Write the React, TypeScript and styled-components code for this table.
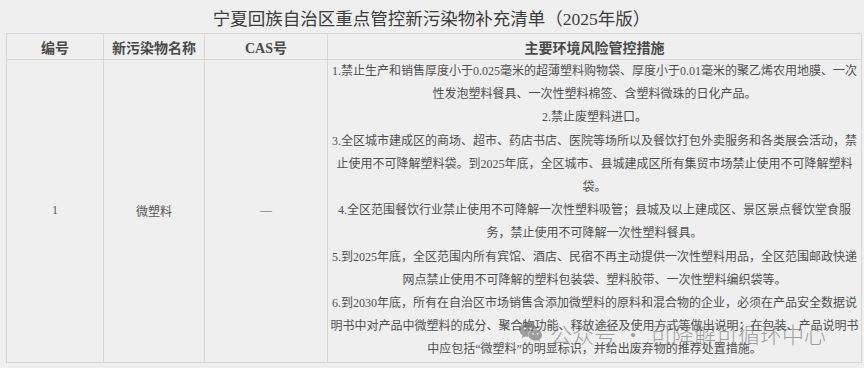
import React from "react";
import styled, { createGlobalStyle } from "styled-components";

const GlobalStyle = createGlobalStyle`
  html, body {
    margin: 0;
    padding: 0;
    background: #efefef;
  }
  body {
    font-family: "Liberation Serif", "Noto Sans CJK SC", serif;
    color: #555;
  }
`;

const Page = styled.div`
  position: relative;
  width: 864px;
  height: 368px;
  padding: 0 7px 0 6px;
  box-sizing: border-box;
  overflow: hidden;
`;

const Title = styled.h1`
  margin: 0;
  height: 33px;
  display: flex;
  align-items: center;
  justify-content: center;
  font-size: 17.5px;
  font-weight: 400;
  color: #3c3c3c;
  padding-top: 1px;
  box-sizing: border-box;
`;

const Table = styled.table`
  width: 851px;
  border-collapse: collapse;
  table-layout: fixed;
  border: 1px solid #d6d6d6;
`;

const HeadCell = styled.th<{ $width: number }>`
  width: ${({ $width }) => $width}px;
  height: 25px;
  padding: 0;
  border: 1px solid #d6d6d6;
  font-size: 14px;
  font-weight: 700;
  color: #4a4a4a;
  text-align: center;
  vertical-align: middle;
`;

const Cell = styled.td`
  height: 301px;
  padding: 0;
  border: 1px solid #d6d6d6;
  font-size: 12px;
  color: #555;
  text-align: center;
  vertical-align: middle;
`;

const MeasureCell = styled(Cell)`
  padding: 0 2px;
`;

const Measure = styled.p`
  margin: 0;
  line-height: 23.2px;
  white-space: nowrap;
  color: #4f4f4f;
`;

const Watermark = styled.div`
  position: absolute;
  left: 519px;
  top: 317px;
  display: flex;
  align-items: center;
  gap: 7px;
  font-family: "Noto Sans CJK SC", sans-serif;
  font-size: 22px;
  font-weight: 300;
  color: rgba(95, 95, 95, 0.58);
  pointer-events: none;
  white-space: nowrap;
`;

const Dot = styled.span`
  display: inline-block;
  margin: 0 6px;
`;

function WeChatIcon() {
  return (
    <svg width="24" height="22" viewBox="0 0 24 22">
      <g fill="rgba(95,95,95,0.58)">
        <path d="M9 1C4.3 1 .5 4.1.5 8c0 2.2 1.2 4.1 3.1 5.4L2.9 16l3-1.6c1 .3 2 .4 3.1.4h.6c-.2-.6-.3-1.2-.3-1.9 0-3.6 3.5-6.4 7.8-6.4h.5C16.9 3.4 13.3 1 9 1z" />
        <path d="M16.3 7.5c-3.7 0-6.7 2.5-6.7 5.5s3 5.5 6.7 5.5c.8 0 1.6-.1 2.3-.3l2.5 1.3-.6-2.2c1.5-1 2.5-2.6 2.5-4.3 0-3-3-5.5-6.7-5.5z" />
      </g>
      <g fill="#efefef">
        <circle cx="6" cy="6.5" r="1.1" />
        <circle cx="11.5" cy="6.5" r="1.1" />
        <circle cx="14" cy="11.8" r="0.9" />
        <circle cx="18.6" cy="11.8" r="0.9" />
      </g>
    </svg>
  );
}

const measures: string[][] = [
  [
    "1.禁止生产和销售厚度小于0.025毫米的超薄塑料购物袋、厚度小于0.01毫米的聚乙烯农用地膜、一次",
    "性发泡塑料餐具、一次性塑料棉签、含塑料微珠的日化产品。",
  ],
  ["2.禁止废塑料进口。"],
  [
    "3.全区城市建成区的商场、超市、药店书店、医院等场所以及餐饮打包外卖服务和各类展会活动，禁",
    "止使用不可降解塑料袋。到2025年底，全区城市、县城建成区所有集贸市场禁止使用不可降解塑料",
    "袋。",
  ],
  [
    "4.全区范围餐饮行业禁止使用不可降解一次性塑料吸管；县城及以上建成区、景区景点餐饮堂食服",
    "务，禁止使用不可降解一次性塑料餐具。",
  ],
  [
    "5.到2025年底，全区范围内所有宾馆、酒店、民宿不再主动提供一次性塑料用品，全区范围邮政快递",
    "网点禁止使用不可降解的塑料包装袋、塑料胶带、一次性塑料编织袋等。",
  ],
  [
    "6.到2030年底，所有在自治区市场销售含添加微塑料的原料和混合物的企业，必须在产品安全数据说",
    "明书中对产品中微塑料的成分、聚合物功能、释放途径及使用方式等做出说明；在包装、产品说明书",
    "中应包括“微塑料”的明显标识，并给出废弃物的推荐处置措施。",
  ],
];

export default function App() {
  return (
    <Page>
      <GlobalStyle />
      <Title>宁夏回族自治区重点管控新污染物补充清单（2025年版）</Title>
      <Table>
        <thead>
          <tr>
            <HeadCell $width={96}>编号</HeadCell>
            <HeadCell $width={100}>新污染物名称</HeadCell>
            <HeadCell $width={122}>CAS号</HeadCell>
            <HeadCell $width={533}>主要环境风险管控措施</HeadCell>
          </tr>
        </thead>
        <tbody>
          <tr>
            <Cell>1</Cell>
            <Cell>微塑料</Cell>
            <Cell>—</Cell>
            <MeasureCell>
              {measures.map((lines, i) => (
                <Measure key={i}>
                  {lines.map((line, j) => (
                    <React.Fragment key={j}>
                      {j > 0 && <br />}
                      {line}
                    </React.Fragment>
                  ))}
                </Measure>
              ))}
            </MeasureCell>
          </tr>
        </tbody>
      </Table>
      <Watermark>
        <WeChatIcon />
        <span>
          公众号<Dot>·</Dot>可降解可循环中心
        </span>
      </Watermark>
    </Page>
  );
}
